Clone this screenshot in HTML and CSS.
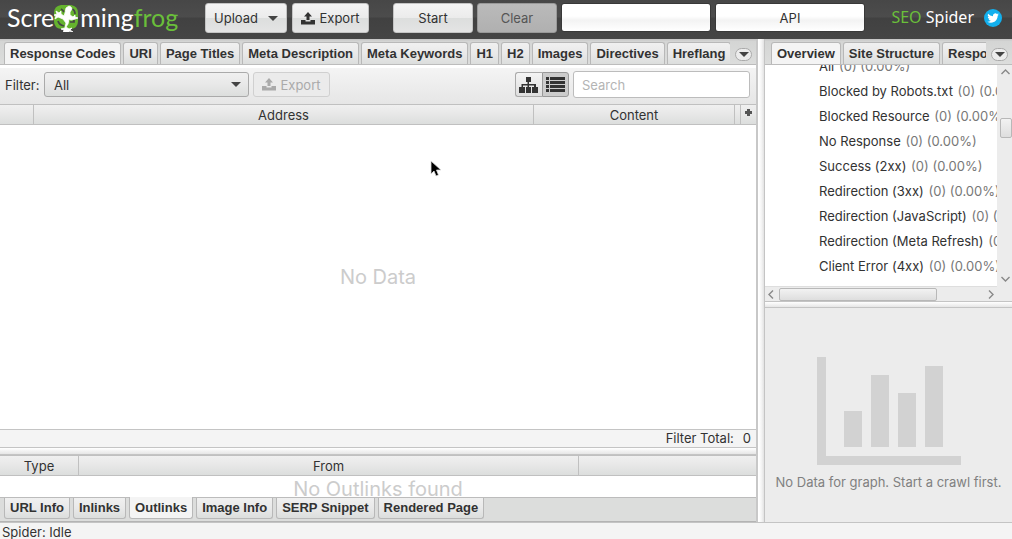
FILE: index.html
```html
<!DOCTYPE html>
<html lang="en">
<head>
<meta charset="utf-8">
<title>Screaming Frog SEO Spider</title>
<link rel="stylesheet" href="styles.css">
</head>
<body>
<header class="topbar">
  <div class="logo">
    <span>Scre</span>
    <svg class="logo-mark" width="26" height="28" viewBox="0 0 26 28" aria-hidden="true">
      <path d="M8 1h10q7 1 7 8v8q0 7-7 8H8q-7-1-7-8V9q0-7 7-8z" fill="#65b32e"/>
      <path d="M5 17q1 4 6 5M19 5q3 1 3 5M17 18h4v-2M8 5q2 1 3 3" fill="none" stroke="#454545" stroke-width="1.700"/>
      <path d="M12 9l1-5 3-2 2 1 1 2-2 3v3l3 2 2-2v2l3 1-3 1-4 1-2-1-1 5-2 3 3 2 3-1-2 2 3 2-4-1 0 2-3-1-3 1 1-3-3-1 4-1 1-5-3-4-5-2-3 2 1-3-2-1 3-1-1-3 3 2 2-2v3l3 2z" fill="#fff" stroke="#fff" stroke-width=".8" stroke-linejoin="round"/>
    </svg>
    <span>ming<span class="green">frog</span></span>
  </div>
  <button class="btn btn-upload" type="button">Upload <i class="caret"></i></button>
  <button class="btn btn-export" type="button">
    <svg width="14" height="13" viewBox="0 0 14 13" aria-hidden="true"><path d="M7 0l4 4.500H8.500V8h-3V4.500H3zM0 8h4.500v1.500h5V8H14v4.500H0z" fill="currentColor"/></svg>Export</button>
  <button class="btn btn-run btn-start" type="button">Start</button>
  <button class="btn btn-run btn-clear" type="button">Clear</button>
  <div class="meter"></div>
  <div class="meter">API</div>
  <div class="product"><span class="green">SEO</span> Spider</div>
  <a class="bird" href="#" aria-label="Twitter">
    <svg width="18" height="18" viewBox="0 0 18 18" aria-hidden="true"><circle cx="9" cy="9" r="9" fill="#13b0ee"/><path transform="translate(3.300 3.300) scale(.48)" fill="#fff" d="M23.950 4.570a10 10 0 0 1-2.820.770 4.960 4.960 0 0 0 2.160-2.720 9.900 9.900 0 0 1-3.130 1.180 4.920 4.920 0 0 0-8.380 4.480A13.900 13.900 0 0 1 1.640 3.160a4.920 4.920 0 0 0 1.520 6.570 4.900 4.900 0 0 1-2.230-.620v.060a4.920 4.920 0 0 0 3.950 4.830 5 5 0 0 1-2.210.080 4.940 4.940 0 0 0 4.600 3.420A9.870 9.870 0 0 1 0 19.540a14 14 0 0 0 7.550 2.210c9.050 0 14-7.500 14-13.980l-.020-.640a9.900 9.900 0 0 0 2.420-2.560z"/></svg>
  </a>
</header>

<main class="workspace">
  <section class="left">
    <nav class="tabs">
      <div class="tab-strip">
        <button class="tab active" type="button">Response Codes</button>
        <button class="tab" type="button">URI</button>
        <button class="tab" type="button">Page Titles</button>
        <button class="tab" type="button">Meta Description</button>
        <button class="tab" type="button">Meta Keywords</button>
        <button class="tab" type="button">H1</button>
        <button class="tab" type="button">H2</button>
        <button class="tab" type="button">Images</button>
        <button class="tab" type="button">Directives</button>
        <button class="tab" type="button">Hreflang</button>
      </div>
      <button class="more" type="button" aria-label="More tabs"><i class="caret"></i></button>
    </nav>
    <div class="toolbar">
      <label for="filter">Filter:</label>
      <div class="select-wrap"><select id="filter"><option>All</option></select><i class="caret"></i></div>
      <button class="btn btn-export small" type="button" disabled>
        <svg width="14" height="13" viewBox="0 0 14 13" aria-hidden="true"><path d="M7 0l4 4.500H8.500V8h-3V4.500H3zM0 8h4.500v1.500h5V8H14v4.500H0z" fill="currentColor"/></svg>Export</button>
      <div class="views">
        <button type="button" aria-label="Tree view"><svg width="20" height="16" viewBox="0 0 20 16" aria-hidden="true"><path d="M7 0h5v5h-2v2h7v3h2v6h-6v-6h2V8.500h-5V10h2v6H7v-6h1.500V8.500H4V10h2v6H0v-6h2.500V7h6V5H7z" fill="#333"/></svg></button>
        <button class="on" type="button" aria-label="List view"><svg width="19" height="15" viewBox="0 0 19 15" aria-hidden="true"><path d="M0 0h3v3H0zM4 0h15v3H4zM0 4h3v3H0zM4 4h15v3H4zM0 8h3v3H0zM4 8h15v3H4zM0 12h3v3H0zM4 12h15v3H4z" fill="#333"/></svg></button>
      </div>
      <input class="search" type="text" placeholder="Search" aria-label="Search">
    </div>
    <div class="grid main-grid">
      <table>
        <colgroup><col class="c-num"><col><col class="c-content"><col class="c-gap"><col class="c-plus"></colgroup>
        <thead><tr><th></th><th>Address</th><th>Content</th><th></th><th class="plus"><svg width="7" height="7" viewBox="0 0 7 7" aria-label="Add column"><path d="M2 0h3v2h2v3H5v2H2V5H0V2h2z" fill="#555"/></svg></th></tr></thead>
        <tbody><tr><td class="empty" colspan="5">No Data</td></tr></tbody>
      </table>
    </div>
    <div class="total"><span>Filter Total:</span><span>0</span></div>
    <div class="splitter"></div>
    <div class="grid link-grid">
      <table>
        <colgroup><col class="c-type"><col><col class="c-rest"></colgroup>
        <thead><tr><th>Type</th><th>From</th><th></th></tr></thead>
        <tbody><tr><td class="empty" colspan="3">No Outlinks found</td></tr></tbody>
      </table>
    </div>
    <nav class="tabs-bottom">
      <button class="tab" type="button">URL Info</button>
      <button class="tab" type="button">Inlinks</button>
      <button class="tab active" type="button">Outlinks</button>
      <button class="tab" type="button">Image Info</button>
      <button class="tab" type="button">SERP Snippet</button>
      <button class="tab" type="button">Rendered Page</button>
    </nav>
  </section>
  <div class="divider"></div>
  <aside class="right">
    <nav class="tabs">
      <div class="tab-strip">
        <button class="tab active" type="button">Overview</button>
        <button class="tab" type="button">Site Structure</button>
        <button class="tab" type="button">Response Times</button>
      </div>
      <button class="more" type="button" aria-label="More tabs"><i class="caret"></i></button>
    </nav>
    <div class="tree">
      <ul class="tree-list">
        <li>All <span>(0) (0.00%)</span></li>
        <li>Blocked by Robots.txt <span>(0) (0.00%)</span></li>
        <li>Blocked Resource <span>(0) (0.00%)</span></li>
        <li>No Response <span>(0) (0.00%)</span></li>
        <li>Success (2xx) <span>(0) (0.00%)</span></li>
        <li>Redirection (3xx) <span>(0) (0.00%)</span></li>
        <li>Redirection (JavaScript) <span>(0) (0.00%)</span></li>
        <li>Redirection (Meta Refresh) <span>(0) (0.00%)</span></li>
        <li>Client Error (4xx) <span>(0) (0.00%)</span></li>
      </ul>
      <div class="vbar">
        <svg width="9" height="6" viewBox="0 0 9 6" aria-hidden="true"><path d="M.5 5l4-4 4 4" fill="none" stroke="#888" stroke-width="1.400"/></svg>
        <div class="thumb"></div>
        <svg width="9" height="6" viewBox="0 0 9 6" aria-hidden="true"><path d="M.5 1l4 4 4-4" fill="none" stroke="#888" stroke-width="1.400"/></svg>
      </div>
      <div class="hbar">
        <svg width="6" height="9" viewBox="0 0 6 9" aria-hidden="true"><path d="M5 .5l-4 4 4 4" fill="none" stroke="#888" stroke-width="1.400"/></svg>
        <div class="thumb"></div>
        <svg width="6" height="9" viewBox="0 0 6 9" aria-hidden="true"><path d="M1 .5l4 4-4 4" fill="none" stroke="#888" stroke-width="1.400"/></svg>
      </div>
    </div>
    <div class="splitter"></div>
    <div class="graph">
      <svg width="144" height="108" viewBox="0 0 144 108" aria-hidden="true"><path d="M0 0h9v99h135v9H0zM27 54h18v36H27zM54 18h18v72H54zM81 36h18v54H81zM108 9h18v81h-18z" fill="#d2d2d2"/></svg>
      <p>No Data for graph. Start a crawl first.</p>
    </div>
  </aside>
</main>
<footer class="status">Spider: Idle</footer>
<svg class="cursor" width="12" height="19" viewBox="0 0 12 19" aria-hidden="true"><path d="M1 1v13l3-3 2 5 2.500-1-2-5H11z" fill="#000" stroke="#ddd" stroke-width=".8"/></svg>
</body>
</html>
```
FILE: styles.css
```css
* { box-sizing: border-box; }

body {
  margin: 0;
  height: 100vh;
  display: flex;
  flex-direction: column;
  overflow: hidden;
  background: #f4f4f4;
  color: #323232;
  font: 13px/16px Inter, "Liberation Sans", sans-serif;
}

button, input, select { font: inherit; color: inherit; margin: 0; }
.green { color: #6abf3a; }

.caret {
  width: 0;
  height: 0;
  border: 5px solid transparent;
  border-top-color: #444;
  border-bottom: 0;
}

/* Top bar */
.topbar {
  flex: none;
  height: 39px;
  display: flex;
  align-items: flex-start;
  padding: 3px 10px 0 7px;
  background: linear-gradient(#474747, #4c4c4c 17px, #414141 18px, #454545);
}
.logo {
  display: flex;
  width: 198px;
  color: #fff;
  font: 25px/28px Lato, sans-serif;
}
.logo-mark { margin: 1px 1px 0 -1px; }
.btn {
  display: flex;
  align-items: center;
  justify-content: center;
  height: 30px;
  padding: 0;
  border: 1px solid #c4c4c4;
  border-radius: 3px;
  background: linear-gradient(#f4f4f4, #ebebeb 50%, #dcdedd 51%, #e4e4e4);
}
.btn-upload { width: 82px; gap: 10px; margin-right: 5px; }
.btn-export { width: 77px; gap: 4px; }
.btn-run { width: 80px; margin-right: 4px; }
.btn-start { margin-left: 24px; }
.btn-clear { background: linear-gradient(#bababa, #b0b0b0); border-color: #999; color: #555; }
.meter {
  flex: 0 1 150px;
  height: 29px;
  margin-right: 4px;
  border: 1px solid #383838;
  border-radius: 3px;
  background: linear-gradient(#fff 45%, #f3f3f3 60%, #fff);
  line-height: 28px;
  text-align: center;
}
.product {
  margin-left: auto;
  color: #fff;
  font: 16px/28px "Noto Sans", sans-serif;
}
.bird { display: flex; margin: 6px 0 0 10px; }

/* Panels */
.workspace { flex: 1; min-height: 0; display: flex; }
.left {
  flex: 1;
  min-width: 0;
  display: flex;
  flex-direction: column;
  border-right: 2px solid #c8c8c8;
}
.divider {
  flex: none;
  width: 7px;
  border-right: 1px solid #c4c4c4;
  background: linear-gradient(90deg, #fff 1px, #f4f4f4, #e2e2e2);
}
.right {
  flex: none;
  width: 247px;
  display: flex;
  flex-direction: column;
}
.splitter {
  flex: none;
  height: 7px;
  border: solid #c4c4c4;
  border-width: 1px 0;
  background: linear-gradient(#fff, #e6e6e6);
}
.left .splitter { height: 8px; }

/* Tabs */
.tabs {
  flex: none;
  display: flex;
  height: 26px;
  padding: 3px 0 0 4px;
  border-bottom: 1px solid #bcbcbc;
  background: linear-gradient(#c8c8c8 1px, #d4d5d4 2px, #dcdddc);
}
.right .tabs { padding-left: 6px; }
.tab-strip {
  flex: 1;
  min-width: 0;
  display: flex;
  gap: 2px;
  overflow: hidden;
}
.tab {
  flex: none;
  padding: 0 5px;
  border: 1px solid #b8b8b8;
  border-bottom: 0;
  border-radius: 3px 3px 0 0;
  background: linear-gradient(#f0f0f0, #e9e9e9 50%, #dcdedd);
  font: bold 13px/16px "Liberation Sans", Arial, sans-serif;
  white-space: nowrap;
}
.tab.active { background: #f4f4f4; }
.more {
  flex: none;
  display: flex;
  align-items: center;
  justify-content: center;
  width: 17px;
  height: 13px;
  margin: 6px 4px 0 5px;
  padding: 0;
  border: 1px solid #aaa;
  border-radius: 7px;
  background: #ececec;
}
.tabs-bottom {
  flex: none;
  display: flex;
  gap: 3px;
  height: 25px;
  padding: 0 0 2px 4px;
  border-top: 1px solid #bcbcbc;
  border-bottom: 1px solid #b4b4b4;
  background: #dcdddc;
}
.tabs-bottom .tab {
  border: 1px solid #b8b8b8;
  border-top: 0;
  border-radius: 0 0 3px 3px;
}
.tabs-bottom .active { margin-top: -1px; }

/* Filter toolbar */
.toolbar {
  flex: none;
  display: flex;
  align-items: center;
  height: 39px;
  padding: 0 6px 3px 5px;
  border-top: 3px solid #fff;
  background: linear-gradient(#f4f4f4, #e6e6e6);
}
.toolbar label { width: 39px; }
.select-wrap { position: relative; width: 205px; margin-right: 4px; }
.select-wrap select {
  display: block;
  width: 100%;
  height: 25px;
  padding: 0 9px;
  appearance: none;
  border: 1px solid #aaa;
  border-radius: 3px;
  background: linear-gradient(#f0f0f0, #e8e8e8 50%, #dcdedd);
}
.select-wrap .caret { position: absolute; right: 8px; top: 10px; pointer-events: none; }
.small { height: 25px; border-color: #d0d0d0; color: #aaa; background: #ebebeb; }
.views { display: flex; margin: 0 4px 0 auto; }
.views button {
  display: flex;
  align-items: center;
  justify-content: center;
  width: 27px;
  height: 25px;
  padding: 0;
  border: 1px solid #aaa;
  border-right: 0;
  border-radius: 3px 0 0 3px;
  background: linear-gradient(#f4f4f4, #dedede);
}
.views .on { border: 1px solid #999; border-radius: 0 3px 3px 0; background: #ccc; }
.search {
  width: 177px;
  height: 27px;
  padding: 0 8px;
  border: 1px solid #bcbcbc;
  border-radius: 3px;
  background: #fff;
}
.search::placeholder { color: #b4b4b4; opacity: 1; }

/* Tables */
.grid { background: #fff; overflow: hidden; }
.main-grid { flex: 1; min-height: 0; }
.link-grid { flex: none; height: 42px; }
.grid table { width: 100%; height: 100%; table-layout: fixed; border-collapse: separate; border-spacing: 0; }
.grid th {
  height: 21px;
  padding: 0;
  border: solid #c0c0c0;
  border-width: 1px 1px 1px 0;
  background: linear-gradient(#f0f0f0, #e8e8e8 45%, #dcdedd);
  font-weight: 400;
  line-height: 18px;
}
.grid th:last-child { border-right: 0; }
.plus svg { display: block; margin: 0 auto 4px; }
.c-num { width: 34px; }
.c-content { width: 201px; }
.c-gap { width: 6px; }
.c-plus { width: 15px; }
.c-type { width: 79px; }
.c-rest { width: 177px; }
.empty { padding: 0; color: #ccc; font-size: 20px; line-height: 24px; text-align: center; }
.link-grid .empty { line-height: 21px; padding-top: 3px; }
.link-grid table { height: 45px; }
.total {
  flex: none;
  display: flex;
  justify-content: flex-end;
  gap: 9px;
  height: 18px;
  padding-right: 5px;
  border-top: 1px solid #c4c4c4;
  line-height: 17px;
}

/* Overview tree */
.tree {
  flex: none;
  display: grid;
  grid-template: 221px 15px / 1fr 15px;
  background: #ececec;
}
.tree-list {
  min-width: 0;
  margin: 0;
  padding: 0 0 0 54px;
  overflow: hidden;
  background: #fff;
  list-style: none;
}
.tree-list li { line-height: 25px; white-space: nowrap; }
.tree-list li:first-child { margin-top: -11px; }
.tree-list span { margin-left: 1px; color: #777; }
.vbar, .hbar { display: flex; align-items: center; justify-content: space-between; }
.vbar { flex-direction: column; padding: 4px 0 4px 2px; }
.hbar { padding: 0 3px; border-top: 1px solid #dedede; }
.thumb { border: 1px solid #b8b8b8; border-radius: 2px; background: linear-gradient(#f2f2f2, #dedede); }
.vbar .thumb { width: 12px; height: 20px; margin: 43px 0 auto; }
.hbar .thumb { width: 158px; height: 13px; margin: 0 auto 0 5px; }

/* Graph placeholder */
.graph {
  flex: 1;
  display: flex;
  flex-direction: column;
  align-items: center;
  gap: 9px;
  padding-top: 49px;
  background: #ececec;
  color: #808080;
}
.graph p { margin: 0; white-space: nowrap; }

.status {
  flex: none;
  height: 17px;
  padding-left: 2px;
  border-top: 1px solid #c4c4c4;
  line-height: 18px;
}
.cursor { position: absolute; left: 430px; top: 160px; pointer-events: none; }
```
